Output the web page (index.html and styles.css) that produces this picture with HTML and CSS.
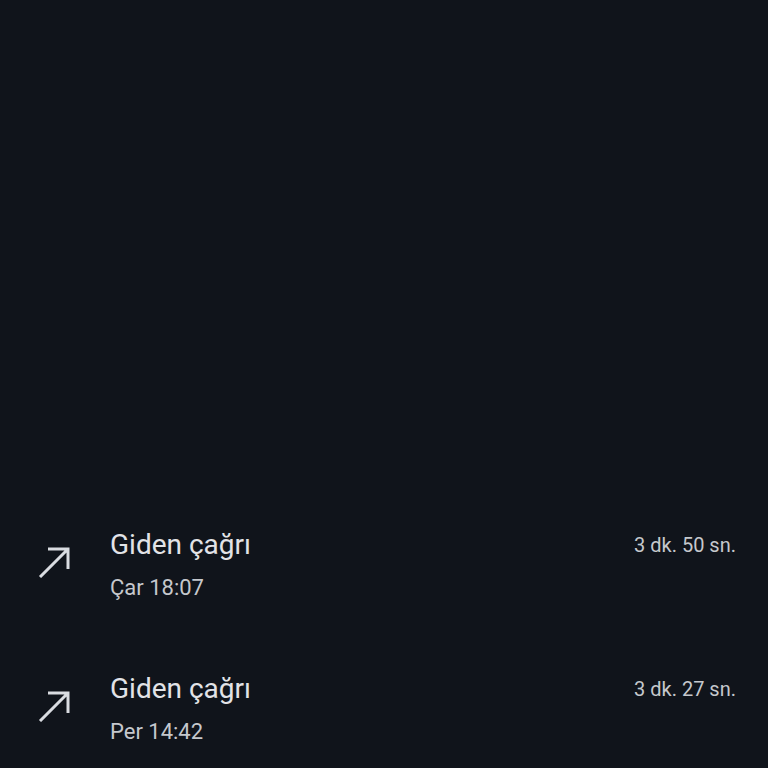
FILE: index.html
```html
<!DOCTYPE html>
<html>
	<head>
		<meta charset="UTF-8">
		<title>Arama geçmişi</title>
		<link rel="stylesheet" href="styles.css">
	</head>
	<body>
		<div class="calls">
			<div class="call">
				<div class="call-icon">
					<svg width="32" height="32" viewBox="0 0 32 32">
						<path d="M10 3H30V23M30 3L2 31" fill="none" stroke="#d9dce1" stroke-width="3"/>
					</svg>
				</div>
				<div class="call-info">
					<div class="call-title">Giden çağrı</div>
					<div class="call-time">Çar 18:07</div>
				</div>
				<div class="call-duration">3 dk. 50 sn.</div>
			</div>
			<div class="call">
				<div class="call-icon">
					<svg width="32" height="32" viewBox="0 0 32 32">
						<path d="M10 3H30V23M30 3L2 31" fill="none" stroke="#d9dce1" stroke-width="3"/>
					</svg>
				</div>
				<div class="call-info">
					<div class="call-title">Giden çağrı</div>
					<div class="call-time">Per 14:42</div>
				</div>
				<div class="call-duration">3 dk. 27 sn.</div>
			</div>
		</div>
	</body>
</html>
```

FILE: styles.css
```css
*{
	margin: 0px;
	padding: 0px;
}

body{
	background-color: #10141b;
	font-family: Roboto, "Noto Sans", sans-serif;
}

/* list of calls, pushed down to the bottom */
.calls{
	padding-top: 527px;
	padding-right: 32px;
	display: flex;
	flex-direction: column;
	gap: 68px;
}

.call{
	display: flex;
}

.call-icon{
	width: 72px;
	padding-left: 38px;
	padding-top: 19px;
}

.call-icon svg{
	display: block;
}

.call-info{
	flex: 1;
}

.call-title{
	font-size: 28px;
	line-height: 36px;
	color: #e2e3e7;
}

.call-time{
	margin-top: 10px;
	font-size: 22px;
	line-height: 30px;
	color: #c5c8cd;
}

.call-duration{
	font-size: 20px;
	line-height: 36px;
	color: #c5c8cd;
}
```
